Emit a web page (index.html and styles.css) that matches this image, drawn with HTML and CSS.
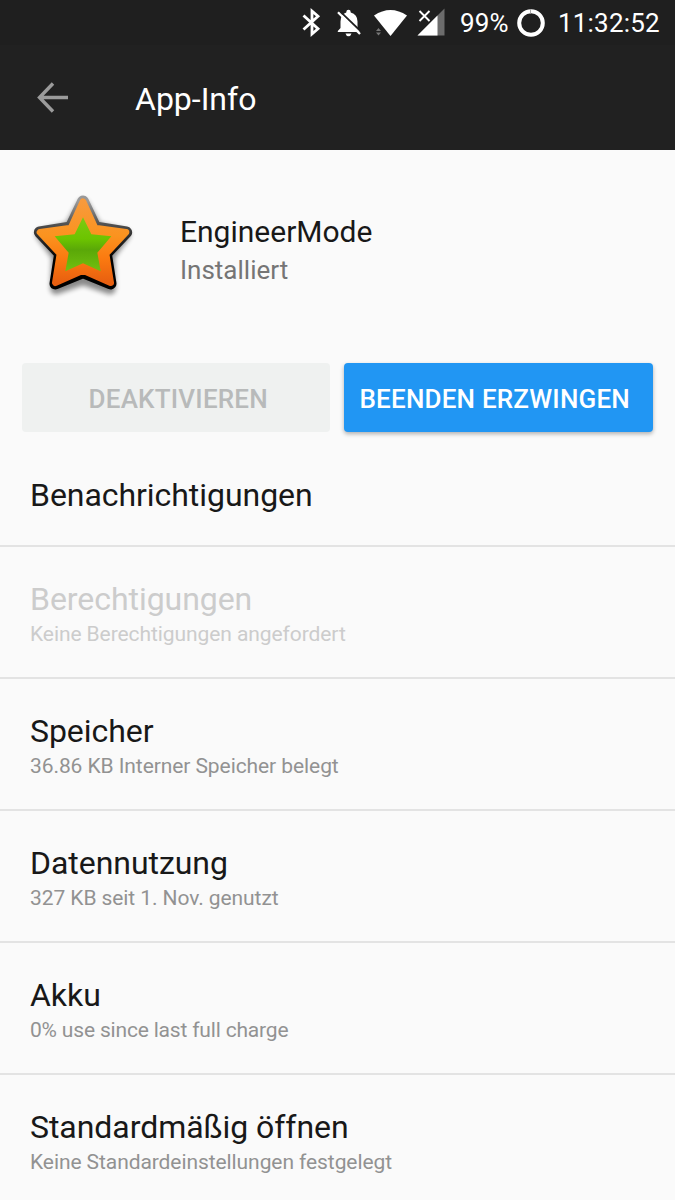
FILE: index.html
```html
<!DOCTYPE html>
<html lang="de">
<head>
    <meta charset="UTF-8">
    <meta name="viewport" content="width=device-width, initial-scale=1.0">
    <title>App-Info</title>
    <link rel="stylesheet" href="styles.css">
</head>
<body>
    <div class="status-bar">
        <!-- bluetooth, muted bell, wifi, mobile signal -->
        <svg class="status-icons" viewBox="0 0 160 45">
            <path d="M13.500 15.500L28 28.800L22 34V11L28 16.200L13.500 29.500" fill="none" stroke="#fff" stroke-width="2.800"/>
            <path d="M47.800 32V31L50.500 28V21.500Q50.500 14.500 56.300 12.500V12Q56.300 9.800 58.500 9.800T60.700 12V12.500Q67.500 14.500 67.500 21.500V28L69.500 30.500V32ZM55.500 33.500H61.500Q60.700 36.300 58.500 36.300T55.500 33.500Z" fill="#fff"/>
            <path d="M49.500 10.800L72 32.500" stroke="#1f1f1f" stroke-width="1.800"/>
            <path d="M48 12.200L70 34" stroke="#fff" stroke-width="2.300"/>
            <path d="M84 15.500Q100.500 4.500 117 15.500L100.500 36Z" fill="#fff"/>
            <path d="M86 31L88.500 28L91 31ZM86 32.500L88.500 35.500L91 32.500Z" fill="#777"/>
            <path d="M127.500 35.500L154.500 8.500V35.500Z" fill="#6c6c6c"/>
            <path d="M127.500 35.500L147.500 15.500V35.500Z" fill="#fff"/>
            <path d="M129.500 11L139.500 21M139.500 11L129.500 21" stroke="#fff" stroke-width="1.900"/>
        </svg>
        <span class="battery-text">99%</span>
        <svg class="battery-icon" viewBox="0 0 28 28">
            <circle cx="14" cy="14" r="11.800" fill="none" stroke="#fff" stroke-width="4"/>
            <path d="M13.500 0V4.500" stroke="#aaa" stroke-width="1"/>
        </svg>
        <span class="clock">11:32:52</span>
    </div>

    <header class="toolbar">
        <svg class="back" viewBox="0 0 32 32">
            <path d="M31 15.500H3M16 1.500L2.500 15.500L16 29.500" fill="none" stroke="#9b9b9b" stroke-width="3.400"/>
        </svg>
        <h1>App-Info</h1>
    </header>

    <main>
        <div class="app">
            <svg class="app-icon" viewBox="30 30 330 330">
                <defs>
                    <linearGradient id="edge" x1="0" y1="0" x2="0" y2="1">
                        <stop offset="0" stop-color="#999"/>
                        <stop offset="0.400" stop-color="#333"/>
                        <stop offset="0.700" stop-color="#000"/>
                    </linearGradient>
                    <linearGradient id="orange" x1="0" y1="0" x2="0" y2="1">
                        <stop offset="0" stop-color="#f79a3c"/>
                        <stop offset="0.420" stop-color="#fb931f"/>
                        <stop offset="0.700" stop-color="#fb7a10"/>
                        <stop offset="1" stop-color="#e85f10"/>
                    </linearGradient>
                    <linearGradient id="green" x1="0" y1="0" x2="0" y2="1">
                        <stop offset="0" stop-color="#7ccb12"/>
                        <stop offset="0.400" stop-color="#6cc400"/>
                        <stop offset="0.600" stop-color="#5aa808"/>
                        <stop offset="1" stop-color="#72c010"/>
                    </linearGradient>
                    <filter id="blur" x="-20%" y="-20%" width="140%" height="140%">
                        <feGaussianBlur stdDeviation="8"/>
                    </filter>
                </defs>
                <path d="M189 74L229 143L314 164L267 228L270 326L189 298L108 326L112 228L64 164L149 143Z" fill="#000" stroke="#000" stroke-width="34" stroke-linejoin="round" opacity="0.450" filter="url(#blur)"/>
                <path d="M189 64L226 142L319 157L258 221L272 311L189 277L106 311L120 221L59 157L152 142Z" fill="url(#edge)" stroke="url(#edge)" stroke-width="35" stroke-linejoin="round"/>
                <path d="M189 65L225 144L318 157L258 221L272 308L189 271L106 308L120 221L60 157L153 144Z" fill="url(#orange)" stroke="url(#orange)" stroke-width="20" stroke-linejoin="round"/>
                <path d="M189 112L214 163L274 169L232 218L242 274L189 250L136 274L146 218L104 169L164 163Z" fill="url(#green)"/>
            </svg>
            <div class="app-text">
                <div class="app-name">EngineerMode</div>
                <div class="app-state">Installiert</div>
            </div>
        </div>

        <div class="buttons">
            <button class="btn btn-disabled" disabled>DEAKTIVIEREN</button>
            <button class="btn btn-primary">BEENDEN ERZWINGEN</button>
        </div>

        <ul class="list">
            <li class="item single">
                <div class="title">Benachrichtigungen</div>
            </li>
            <li class="item disabled">
                <div class="title">Berechtigungen</div>
                <div class="summary">Keine Berechtigungen angefordert</div>
            </li>
            <li class="item">
                <div class="title">Speicher</div>
                <div class="summary">36.86 KB Interner Speicher belegt</div>
            </li>
            <li class="item">
                <div class="title">Datennutzung</div>
                <div class="summary">327 KB seit 1. Nov. genutzt</div>
            </li>
            <li class="item">
                <div class="title">Akku</div>
                <div class="summary battery">0% use since last full charge</div>
            </li>
            <li class="item">
                <div class="title">Standardmäßig öffnen</div>
                <div class="summary">Keine Standardeinstellungen festgelegt</div>
            </li>
        </ul>
    </main>
</body>
</html>
```
FILE: styles.css
```css
* {
    box-sizing: border-box;
}

body {
    margin: 0;
    height: 1200px;
    overflow: hidden;
    font-family: Roboto, sans-serif;
    background-color: #fafafa;
    color: #181818;
}

.status-bar {
    display: flex;
    align-items: center;
    height: 45px;
    padding-left: 290px;
    background-color: #1f1f1f;
    color: #fff;
    font-size: 26px;
    white-space: nowrap;
}

.status-icons {
    width: 160px;
    height: 45px;
    flex: none;
}

.battery-text {
    width: 57px;
    margin-left: 10px;
    letter-spacing: 0.2px;
}

.battery-icon {
    width: 28px;
    height: 28px;
    flex: none;
}

.clock {
    margin-left: 13px;
    letter-spacing: 0.2px;
}

.toolbar {
    display: flex;
    align-items: center;
    height: 105px;
    padding-left: 37px;
    background-color: #212121;
    color: #fff;
}

.back {
    width: 32px;
    height: 32px;
    margin-right: 66px;
}

.toolbar h1 {
    margin: 3px 0 0;
    font-size: 32px;
    font-weight: 400;
}

.app {
    display: flex;
    height: 213px;
    padding: 40px 30px 0;
}

.app-icon {
    width: 110px;
    height: 110px;
    margin-right: 40px;
}

.app-text {
    padding-top: 23px;
}

.app-name {
    font-size: 30px;
    line-height: 38px;
}

.app-state {
    font-size: 26px;
    line-height: 38px;
    color: #757575;
}

.buttons {
    display: flex;
    gap: 14px;
    padding: 0 22px;
}

.btn {
    flex: 1;
    height: 69px;
    padding: 2px 0 0;
    border: none;
    border-radius: 4px;
    font-family: inherit;
    font-size: 26px;
    font-weight: 500;
    letter-spacing: 0.2px;
    white-space: nowrap;
}

.btn-disabled {
    padding-left: 5px;
    background-color: #eff1f0;
    color: #b8baba;
}

.btn-primary {
    padding-right: 7px;
    background-color: #2196f3;
    color: #fff;
    box-shadow: 0 2px 4px rgba(0, 0, 0, 0.3);
}

.list {
    margin: 0;
    padding: 0;
    list-style: none;
}

.item {
    height: 132px;
    padding: 33px 30px 0;
    border-bottom: 2px solid #e3e3e3;
}

.item.single {
    height: 115px;
    padding-top: 44px;
}

.item:last-child {
    border-bottom: none;
}

.title {
    font-size: 32px;
    line-height: 38px;
    letter-spacing: -0.05px;
}

.summary {
    padding-top: 1px;
    font-size: 21px;
    line-height: 30px;
    letter-spacing: -0.08px;
    color: #929292;
}

.summary.battery {
    letter-spacing: -0.18px;
}

.disabled .title,
.disabled .summary {
    color: #cccccc;
}
```
